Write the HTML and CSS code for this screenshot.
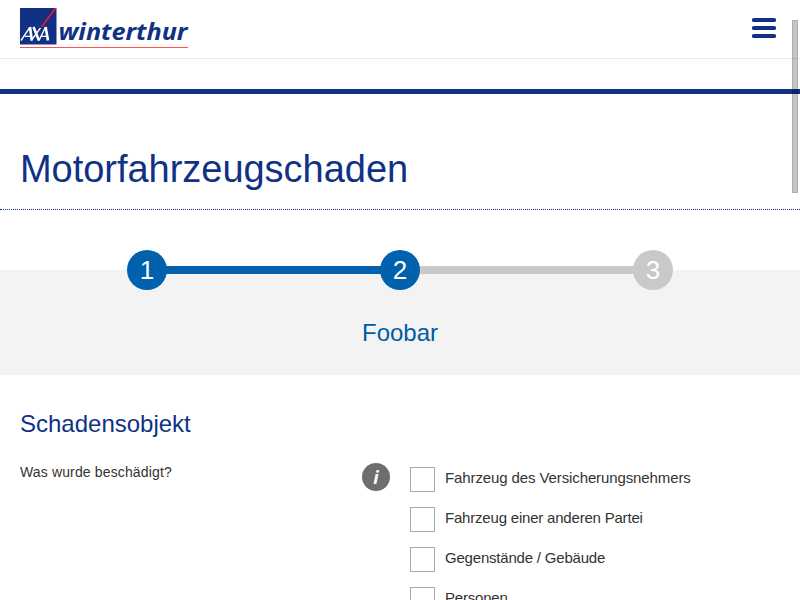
FILE: index.html
```html
<!DOCTYPE html>
<html lang="de">
<head>
<meta charset="utf-8">
<title>Motorfahrzeugschaden</title>
<link rel="stylesheet" href="styles.css">
</head>
<body>
<header class="header">
  <svg class="logo" width="170" height="42" viewBox="0 0 170 42">
    <rect width="36.5" height="36.5" fill="#103184"/>
    <path d="M21.500 19 35.700 0" stroke="#f0142d" stroke-width="1.700"/>
    <g fill="none" stroke="#fff">
      <path d="M1 32.500 9.500 19.800M5 28.400H11M11.300 32.500 20.500 19.800M19 32.500 25.200 19.800M20.500 28.400H27" stroke-width="1.400"/>
      <path d="M10 19 11.800 32.500M13.500 19 19 32.500M25.600 19 28 32.500" stroke-width="2.600"/>
    </g>
    <text class="logo-text" x="38.500" y="32" textLength="129" lengthAdjust="spacingAndGlyphs">winterthur</text>
    <rect y="39" width="168" height="1" fill="#ff5050"/>
  </svg>
  <button class="menu" aria-label="Menu"><i></i><i></i><i></i></button>
</header>
<main>
  <h1 class="title">Motorfahrzeugschaden</h1>
  <section class="progress">
    <div class="steps">
      <span class="step">1</span>
      <span class="bar"></span>
      <span class="step">2</span>
      <span class="bar todo"></span>
      <span class="step todo">3</span>
    </div>
    <p class="step-name">Foobar</p>
  </section>
  <section class="form">
    <h2 class="subtitle">Schadensobjekt</h2>
    <div class="row">
      <p class="question">Was wurde beschädigt?</p>
      <span class="info">i</span>
      <div class="options">
        <div class="option"><span class="box"></span><span class="label wide">Fahrzeug des Versicherungsnehmers</span></div>
        <div class="option"><span class="box"></span><span class="label">Fahrzeug einer anderen Partei</span></div>
        <div class="option"><span class="box"></span><span class="label">Gegenstände / Gebäude</span></div>
        <div class="option"><span class="box"></span><span class="label">Personen</span></div>
      </div>
    </div>
  </section>
</main>
<div class="scrollbar"></div>
</body>
</html>
```
FILE: styles.css
```css
* { box-sizing: border-box; }
html, body { height: 600px; overflow: hidden; }
body { margin: 0; background: #fff; color: #333; font-family: "Liberation Sans", Arial, sans-serif; }
h1, h2, p { margin: 0; font-weight: normal; }
.header { display: flex; justify-content: space-between; align-items: flex-start; height: 59px; padding: 8px 24px 0 20px; border-bottom: 1px solid #ececec; }
.logo { display: block; }
.logo-text { font: italic bold 24px "Noto Sans", "Open Sans", sans-serif; fill: #103184; }
.menu { display: flex; flex-direction: column; gap: 4px; width: 24px; margin-top: 10px; padding: 0; border: 0; background: none; }
.menu i { display: block; height: 4px; border-radius: 1.5px; background: #103184; }
main { margin-top: 30px; border-top: 5px solid #103184; }
.title { height: 116px; padding: 53px 20px 0; border-bottom: 1px dotted #103184; color: #103184; font-size: 38px; line-height: 44px; letter-spacing: -.03px; }
.progress { height: 165px; padding-top: 40px; background: linear-gradient(#fff 60px, #f3f3f3 60px); }
.steps { display: flex; align-items: center; width: 546px; margin: 0 auto; }
.step { position: relative; z-index: 1; width: 40px; height: 40px; border-radius: 50%; background: #0062ac; color: #fff; font-size: 26px; line-height: 40px; text-align: center; }
.bar { flex: 1; height: 8px; margin: 0 -1px; background: #0062ac; }
.todo { background: #c9c9c9; }
.step-name { margin-top: 29px; color: #005ba5; font-size: 24px; line-height: 28px; text-align: center; }
.form { padding: 35px 20px 0; }
.subtitle { color: #103184; font-size: 24px; line-height: 28px; }
.row { display: flex; align-items: flex-start; margin-top: 25px; }
.question { width: 342px; margin-top: 1px; font-size: 14px; line-height: 16px; letter-spacing: .14px; }
.info { width: 28px; height: 28px; margin-right: 20px; border-radius: 50%; background: #6e6e6e; color: #fff; font: italic bold 18px/28px "Open Sans", sans-serif; text-align: center; }
.options { padding-top: 4px; }
.option { display: flex; gap: 10px; height: 40px; }
.box { width: 25px; height: 25px; border: 1px solid #aaa; }
.label { margin-top: 2px; font-size: 15px; line-height: 18px; letter-spacing: -.2px; white-space: nowrap; }
.label.wide { letter-spacing: -.11px; }
.scrollbar { position: absolute; top: 20px; right: 2px; width: 6px; height: 173px; border: 1px solid rgba(0,0,0,.1); background: rgba(0,0,0,.23); }
```
